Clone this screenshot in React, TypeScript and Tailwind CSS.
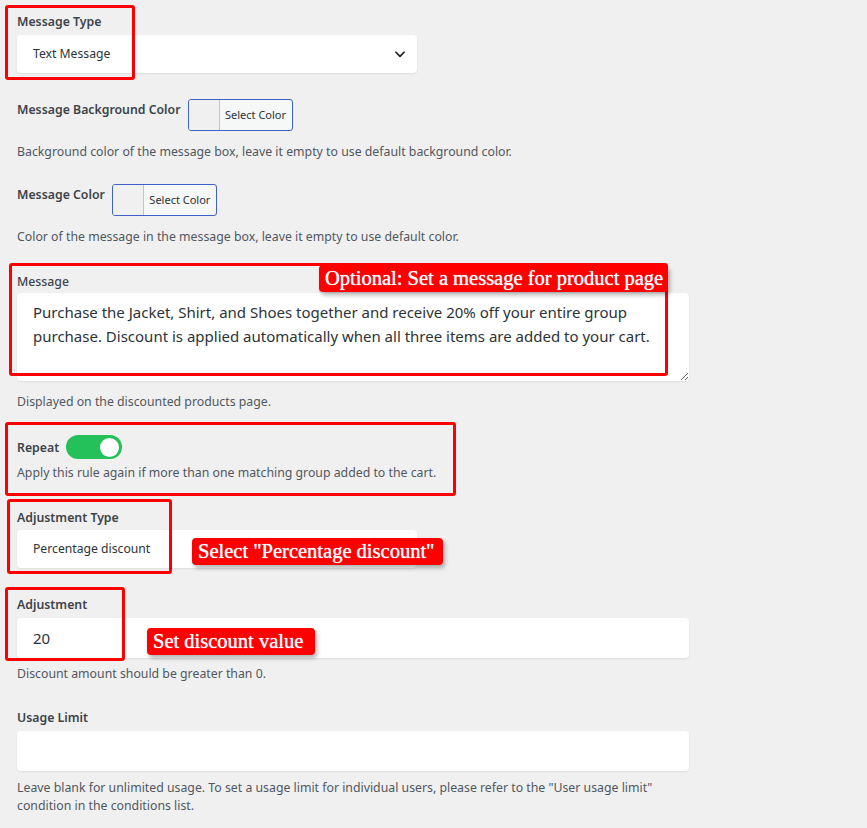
import React from "react";

const sans = { fontFamily: '"Noto Sans", "Open Sans", sans-serif' };
const serif = { fontFamily: '"Liberation Serif", "Times New Roman", serif' };

function Label({ children, className = "" }: { children: React.ReactNode; className?: string }) {
  return (
    <div className={`h-[18px] pt-[1px] text-[12.3px] leading-[18px] font-semibold text-[#3c434a] ${className}`}>
      {children}
    </div>
  );
}

function Desc({ children, className = "" }: { children: React.ReactNode; className?: string }) {
  return <div className={`text-[12.3px] leading-[18px] text-[#50575e] ${className}`}>{children}</div>;
}

function ColorButton() {
  return (
    <div className="flex h-[32px] w-[105px] rounded-[3px] border border-[#3f62c9] bg-[#f6f7f7] overflow-hidden">
      <div className="w-[31px] bg-[#f0f0f1] border-r border-[#c3c4c7]" />
      <div className="flex flex-1 items-center justify-center text-[11px] text-[#2c3338]">Select Color</div>
    </div>
  );
}

function Chevron() {
  return (
    <svg width="14" height="14" viewBox="0 0 24 24" fill="none" stroke="#1d2327" strokeWidth="3" strokeLinecap="round" strokeLinejoin="round">
      <path d="M5 9l7 7 7-7" />
    </svg>
  );
}

function Callout({ children, className }: { children: React.ReactNode; className: string }) {
  return (
    <div
      className={`absolute flex items-center rounded-[4px] bg-[#ff0000] px-[6px] text-[20.5px] leading-none whitespace-nowrap text-white shadow-[2px_3px_4px_rgba(0,0,0,0.3)] [text-shadow:0_0_0.8px_#ffffff] ${className}`}
      style={serif}
    >
      {children}
    </div>
  );
}

export default function App() {
  return (
    <div className="relative min-h-screen bg-[#f0f0f1]" style={sans}>
      <div className="w-[689px] pl-[17px] pt-[12px] pb-[20px]">
        {/* Message type */}
        <Label>Message Type</Label>
        <div className="mt-[5px] flex h-[38px] w-[400px] items-center justify-between rounded-[4px] bg-white pl-[16px] pr-[10px] text-[12.2px] text-[#2c3338] shadow-[0_1px_2px_rgba(0,0,0,0.08)]">
          <span>Text Message</span>
          <Chevron />
        </div>

        {/* Background colour */}
        <div className="mt-[26px] flex items-start gap-[7px]">
          <Label className="mt-[1px]">Message Background Color</Label>
          <ColorButton />
        </div>
        <Desc className="mt-[12px]">
          Background color of the message box, leave it empty to use default background color.
        </Desc>

        {/* Text colour */}
        <div className="mt-[23px] flex items-start gap-[7px]">
          <Label className="mt-[1px]">Message Color</Label>
          <ColorButton />
        </div>
        <Desc className="mt-[12px]">Color of the message in the message box, leave it empty to use default color.</Desc>

        {/* Message */}
        <div className="mt-[26px] h-[18px] pt-[1px] text-[12.3px] leading-[18px] font-medium text-[#3c434a]">Message</div>
        <textarea
          readOnly
          className="mt-[3px] block h-[88px] w-[672px] rounded-[4px] bg-white px-[16px] py-[7px] text-[15px] leading-[24px] text-[#2c3338] shadow-[0_1px_2px_rgba(0,0,0,0.08)] outline-none"
          style={sans}
          defaultValue="Purchase the Jacket, Shirt, and Shoes together and receive 20% off your entire group purchase. Discount is applied automatically when all three items are added to your cart."
        />
        <Desc className="mt-[12px]">Displayed on the discounted products page.</Desc>

        {/* Repeat */}
        <div className="mt-[24px] flex items-center gap-[7px]">
          <Label>Repeat</Label>
          <div className="flex h-[24px] w-[56px] items-center justify-end rounded-full bg-[#24c05a] pr-[3px]">
            <div className="h-[19px] w-[19px] rounded-full bg-white" />
          </div>
        </div>
        <Desc className="mt-[5px]">Apply this rule again if more than one matching group added to the cart.</Desc>

        {/* Adjustment type */}
        <Label className="mt-[26px]">Adjustment Type</Label>
        <div className="mt-[4px] flex h-[38px] w-[400px] items-center justify-between rounded-[4px] bg-white pl-[16px] pr-[10px] text-[12.2px] text-[#2c3338] shadow-[0_1px_2px_rgba(0,0,0,0.08)]">
          <span>Percentage discount</span>
          <Chevron />
        </div>

        {/* Adjustment */}
        <Label className="mt-[27px]">Adjustment</Label>
        <div className="mt-[5px] flex h-[40px] w-[672px] items-center rounded-[4px] bg-white pl-[16px] text-[15px] text-[#2c3338] shadow-[0_1px_2px_rgba(0,0,0,0.08)]">
          20
        </div>
        <Desc className="mt-[7px]">Discount amount should be greater than 0.</Desc>

        {/* Usage limit */}
        <Label className="mt-[25px]">Usage Limit</Label>
        <div className="mt-[5px] h-[40px] w-[672px] rounded-[4px] bg-white shadow-[0_1px_2px_rgba(0,0,0,0.08)]" />
        <Desc className="mt-[8px]">
          Leave blank for unlimited usage. To set a usage limit for individual users, please refer to the "User usage limit"
          condition in the conditions list.
        </Desc>
      </div>

      {/* Highlight frames */}
      <div className="pointer-events-none absolute left-[5px] top-[5px] h-[75px] w-[130px] rounded-[3px] border-[3px] border-[#ff0000]" />
      <div className="pointer-events-none absolute left-[9px] top-[263px] h-[113px] w-[659px] rounded-[3px] border-[3px] border-[#ff0000]" />
      <div className="pointer-events-none absolute left-[5px] top-[422px] h-[74px] w-[451px] rounded-[3px] border-[3px] border-[#ff0000]" />
      <div className="pointer-events-none absolute left-[7px] top-[499px] h-[75px] w-[165px] rounded-[3px] border-[3px] border-[#ff0000]" />
      <div className="pointer-events-none absolute left-[5px] top-[587px] h-[74px] w-[120px] rounded-[3px] border-[3px] border-[#ff0000]" />

      {/* Callouts */}
      <Callout className="left-[319px] top-[265px] h-[27px] w-[349px]">Optional: Set a message for product page</Callout>
      <Callout className="left-[192px] top-[538px] h-[27px] w-[251px]">Select "Percentage discount"</Callout>
      <Callout className="left-[147px] top-[628px] h-[27px] w-[168px]">Set discount value</Callout>
    </div>
  );
}
